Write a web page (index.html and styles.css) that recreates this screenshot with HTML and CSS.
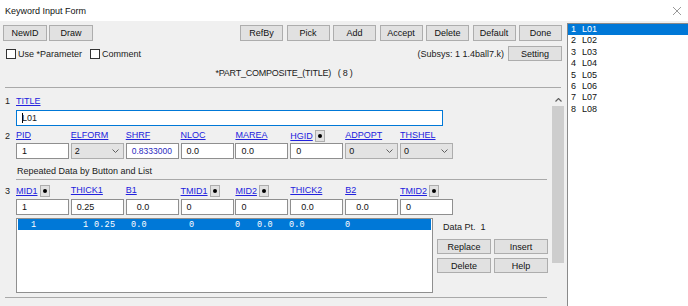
FILE: index.html
```html
<!DOCTYPE html>
<html>
<head>
<meta charset="utf-8">
<link rel="stylesheet" href="styles.css">
</head>
<body>
<div class="titlebar">
  <span class="title">Keyword Input Form</span>
  <svg class="close" width="10" height="10" viewBox="0 0 10 10"><path d="M1 1 L9 9 M9 1 L1 9" stroke="#9a9a9a" stroke-width="1" fill="none"/></svg>
</div>
<div class="main">
  <div class="form">
    <div class="toolbar">
      <div class="group">
        <span class="btn w44">NewID</span>
        <span class="btn w44">Draw</span>
      </div>
      <div class="group group-right">
        <span class="btn">RefBy</span>
        <span class="btn">Pick</span>
        <span class="btn">Add</span>
        <span class="btn">Accept</span>
        <span class="btn">Delete</span>
        <span class="btn">Default</span>
        <span class="btn">Done</span>
      </div>
    </div>
    <div class="optrow">
      <span class="check"><span class="box"></span>Use *Parameter</span>
      <span class="check"><span class="box"></span>Comment</span>
      <span class="spacer"></span>
      <span class="subsys">(Subsys: 1 1.4ball7.k)</span>
      <span class="btn setting">Setting</span>
    </div>
    <div class="heading">*PART_COMPOSITE_(TITLE)&nbsp;&nbsp;&nbsp;( 8 )</div>
    <div class="sep sep-top"></div>
    <div class="panel">
      <div class="panel-body">
        <div class="labelrow first">
          <span class="num">1</span>
          <span class="lbl">TITLE</span>
        </div>
        <div class="title-input"><span class="caret"></span>L01</div>

        <div class="labelrow r2">
          <span class="num">2</span>
          <div class="grid">
            <span class="lbl">PID</span>
            <span class="lbl">ELFORM</span>
            <span class="lbl">SHRF</span>
            <span class="lbl">NLOC</span>
            <span class="lbl">MAREA</span>
            <span class="lblwrap"><span class="lbl">HGID</span><span class="pick"><span class="dot"></span></span></span>
            <span class="lbl">ADPOPT</span>
            <span class="lbl">THSHEL</span>
          </div>
        </div>
        <div class="fieldrow r2f">
          <div class="grid">
            <span class="inp">1</span>
            <span class="sel">2<svg class="chev" width="7" height="4" viewBox="0 0 7 4"><path d="M0.5 0.5 L3.5 3.5 L6.5 0.5" stroke="#606060" fill="none"/></svg></span>
            <span class="inp small blue">0.8333000</span>
            <span class="inp">0.0</span>
            <span class="inp">0.0</span>
            <span class="inp">0</span>
            <span class="sel">0<svg class="chev" width="7" height="4" viewBox="0 0 7 4"><path d="M0.5 0.5 L3.5 3.5 L6.5 0.5" stroke="#606060" fill="none"/></svg></span>
            <span class="sel">0<svg class="chev" width="7" height="4" viewBox="0 0 7 4"><path d="M0.5 0.5 L3.5 3.5 L6.5 0.5" stroke="#606060" fill="none"/></svg></span>
          </div>
        </div>

        <div class="repeated">Repeated Data by Button and List</div>
        <div class="sep sep-mid"></div>

        <div class="labelrow r3">
          <span class="num">3</span>
          <div class="grid">
            <span class="lblwrap"><span class="lbl">MID1</span><span class="pick"><span class="dot"></span></span></span>
            <span class="lbl">THICK1</span>
            <span class="lbl">B1</span>
            <span class="lblwrap"><span class="lbl">TMID1</span><span class="pick"><span class="dot"></span></span></span>
            <span class="lblwrap"><span class="lbl">MID2</span><span class="pick"><span class="dot"></span></span></span>
            <span class="lbl">THICK2</span>
            <span class="lbl">B2</span>
            <span class="lblwrap"><span class="lbl">TMID2</span><span class="pick"><span class="dot"></span></span></span>
          </div>
        </div>
        <div class="fieldrow r3f">
          <div class="grid">
            <span class="inp">1</span>
            <span class="inp">0.25</span>
            <span class="inp ind">0.0</span>
            <span class="inp">0</span>
            <span class="inp">0</span>
            <span class="inp ind">0.0</span>
            <span class="inp ind">0.0</span>
            <span class="inp">0</span>
          </div>
        </div>

        <div class="listarea">
          <div class="datalist">
            <div class="datarow">
              <span class="c c1">1</span>
              <span class="c c2">1</span>
              <span class="c c3">0.25</span>
              <span class="c c4">0.0</span>
              <span class="c c5">0</span>
              <span class="c c6">0</span>
              <span class="c c7">0.0</span>
              <span class="c c8">0.0</span>
              <span class="c c9">0</span>
            </div>
          </div>
          <div class="side">
            <div class="datapt">Data Pt.&nbsp;&nbsp;1</div>
            <div class="sidebtns">
              <span class="btn sbtn">Replace</span>
              <span class="btn sbtn">Insert</span>
              <span class="btn sbtn">Delete</span>
              <span class="btn sbtn">Help</span>
            </div>
          </div>
        </div>
        <div class="sep sep-bot"></div>
      </div>
      <div class="scrollbar">
        <div class="arrow"><svg width="7" height="4" viewBox="0 0 7 4"><path d="M0.5 3.5 L3.5 0.5 L6.5 3.5" stroke="#606060" fill="none" stroke-width="1.2"/></svg></div>
        <div class="thumb"></div>
      </div>
    </div>
  </div>
  <div class="keylist">
    <div class="item selected"><span class="n">1</span>L01</div>
    <div class="item"><span class="n">2</span>L02</div>
    <div class="item"><span class="n">3</span>L03</div>
    <div class="item"><span class="n">4</span>L04</div>
    <div class="item"><span class="n">5</span>L05</div>
    <div class="item"><span class="n">6</span>L06</div>
    <div class="item"><span class="n">7</span>L07</div>
    <div class="item"><span class="n">8</span>L08</div>
  </div>
</div>
</body>
</html>
```

FILE: styles.css
```css
* { box-sizing: border-box; }
html, body { margin: 0; padding: 0; }
body {
  width: 688px;
  height: 306px;
  overflow: hidden;
  background: #f0f0f0;
  font-family: "Liberation Sans", Arial, sans-serif;
  font-size: 9px;
  color: #1a1a1a;
}
.titlebar {
  height: 21px;
  background: #ffffff;
  display: flex;
  align-items: center;
  justify-content: space-between;
  padding: 0 6px 0 5px;
}
.title { color: #111; }
.close { display: block; }

.main { display: flex; align-items: flex-start; }
.form { width: 567px; flex: none; }

.btn {
  display: flex;
  align-items: center;
  justify-content: center;
  height: 16px;
  border: 1px solid #adadad;
  background: #e1e1e1;
  color: #111;
}
.toolbar {
  display: flex;
  justify-content: space-between;
  margin-top: 4px;
  padding: 0 5px 0 3px;
}
.group { display: flex; gap: 2px; }
.group-right { gap: 3.5px; }
.group-right .btn { width: 43px; }
.w44 { width: 44px; }

.optrow {
  display: flex;
  align-items: center;
  height: 15px;
  margin-top: 5px;
  padding: 0 5px 0 6px;
}
.check { display: flex; align-items: center; margin-right: 8px; }
.box {
  width: 10px;
  height: 10px;
  border: 1px solid #333;
  background: #fff;
  margin-right: 2px;
}
.spacer { flex: 1; }
.subsys { margin-right: 4px; }
.setting { width: 54px; height: 15px; }

.heading {
  text-align: center;
  margin-top: 6px;
  line-height: 12px;
  padding-left: 1px;
  letter-spacing: -0.25px;
}
.sep { height: 1px; background: #a9a9a9; }
.sep-top { margin: 8px 6px 0 5px; }

.panel { display: flex; margin-top: 5px; height: 213px; }
.panel-body { width: 549px; flex: none; padding-top: 2px; }

.labelrow { display: flex; align-items: center; height: 12px; }
.num { width: 16px; padding-left: 5px; flex: none; color: #222; }
.lbl { color: #2222dd; text-decoration: underline; white-space: nowrap; }
.lblwrap { display: flex; align-items: center; }
.pick {
  width: 10px;
  height: 12px;
  margin-left: 2px;
  border: 1px solid #adadad;
  background: #e1e1e1;
  display: flex;
  align-items: center;
  justify-content: center;
}
.dot { width: 4px; height: 4px; border-radius: 50%; background: #000; }

.grid {
  display: grid;
  grid-template-columns: repeat(8, 53px);
  column-gap: 1.86px;
}

.title-input {
  margin: 3px 0 0 16px;
  width: 427px;
  height: 16px;
  border: 1px solid #0078d7;
  background: #fff;
  display: flex;
  align-items: center;
  padding-left: 5px;
}
.caret { width: 1px; height: 10px; background: #000; margin-right: -1px; }

.r2 { margin-top: 4px; }
.fieldrow { padding-left: 16px; }
.r2f { margin-top: 1px; }
.inp {
  height: 16px;
  border: 1px solid #8f8f8f;
  background: #fff;
  display: flex;
  align-items: center;
  padding-left: 5px;
  color: #111;
}
.inp.small { font-size: 8.5px; }
.inp.blue { color: #2a2ac0; }
.inp.ind { padding-left: 10px; }
.sel {
  height: 16px;
  border: 1px solid #adadad;
  background: #e3e3e3;
  display: flex;
  align-items: center;
  justify-content: space-between;
  padding: 0 4px 0 3px;
  color: #111;
}

.repeated { margin-top: 6px; padding-left: 17px; line-height: 12px; }
.sep-mid { margin: 2px 2px 0 16px; }
.r3 { margin-top: 5px; }
.r3f { margin-top: 2px; }

.listarea { display: flex; margin-top: 3px; padding-left: 16px; }
.datalist {
  width: 417px;
  height: 75px;
  border: 1px solid #8f8f8f;
  background: #fff;
  padding: 0 1px;
}
.datarow {
  display: flex;
  height: 11px;
  align-items: center;
  background: #0078d7;
  color: #fff;
  font-family: "Liberation Mono", monospace;
  font-size: 8.5px;
  letter-spacing: 0.2px;
  white-space: pre;
}
.c1 { margin-left: 13px; width: 52px; }
.c2 { width: 11px; }
.c3 { width: 37px; }
.c4 { width: 58px; }
.c5 { width: 46px; }
.c6 { width: 22px; }
.c7 { width: 32px; }
.c8 { width: 56px; }
.c9 { width: 20px; }

.side { margin-left: 4px; }
.datapt { margin-top: 3px; padding-left: 6px; line-height: 12px; }
.sidebtns {
  margin-top: 6px;
  display: grid;
  grid-template-columns: 54px 54px;
  column-gap: 3px;
  row-gap: 4px;
}
.sbtn { height: 15px; }
.sep-bot { margin: 4px 2px 0 5px; }

.scrollbar {
  margin-left: 3px;
  width: 12px;
  height: 213px;
  background: #f0f0f0;
  display: flex;
  flex-direction: column;
  align-items: stretch;
}
.arrow { height: 13px; display: flex; align-items: center; justify-content: center; }
.thumb { height: 157px; background: #cdcdcd; }

.keylist {
  margin-top: 2px;
  width: 130px;
  height: 290px;
  border: 1px solid #8a8a8a;
  border-right: none;
  background: #fff;
}
.item {
  height: 11.4px;
  line-height: 11.4px;
  padding-left: 3px;
  display: flex;
  color: #111;
}
.item .n { width: 11px; }
.item.selected { background: #0078d7; color: #fff; }
```
